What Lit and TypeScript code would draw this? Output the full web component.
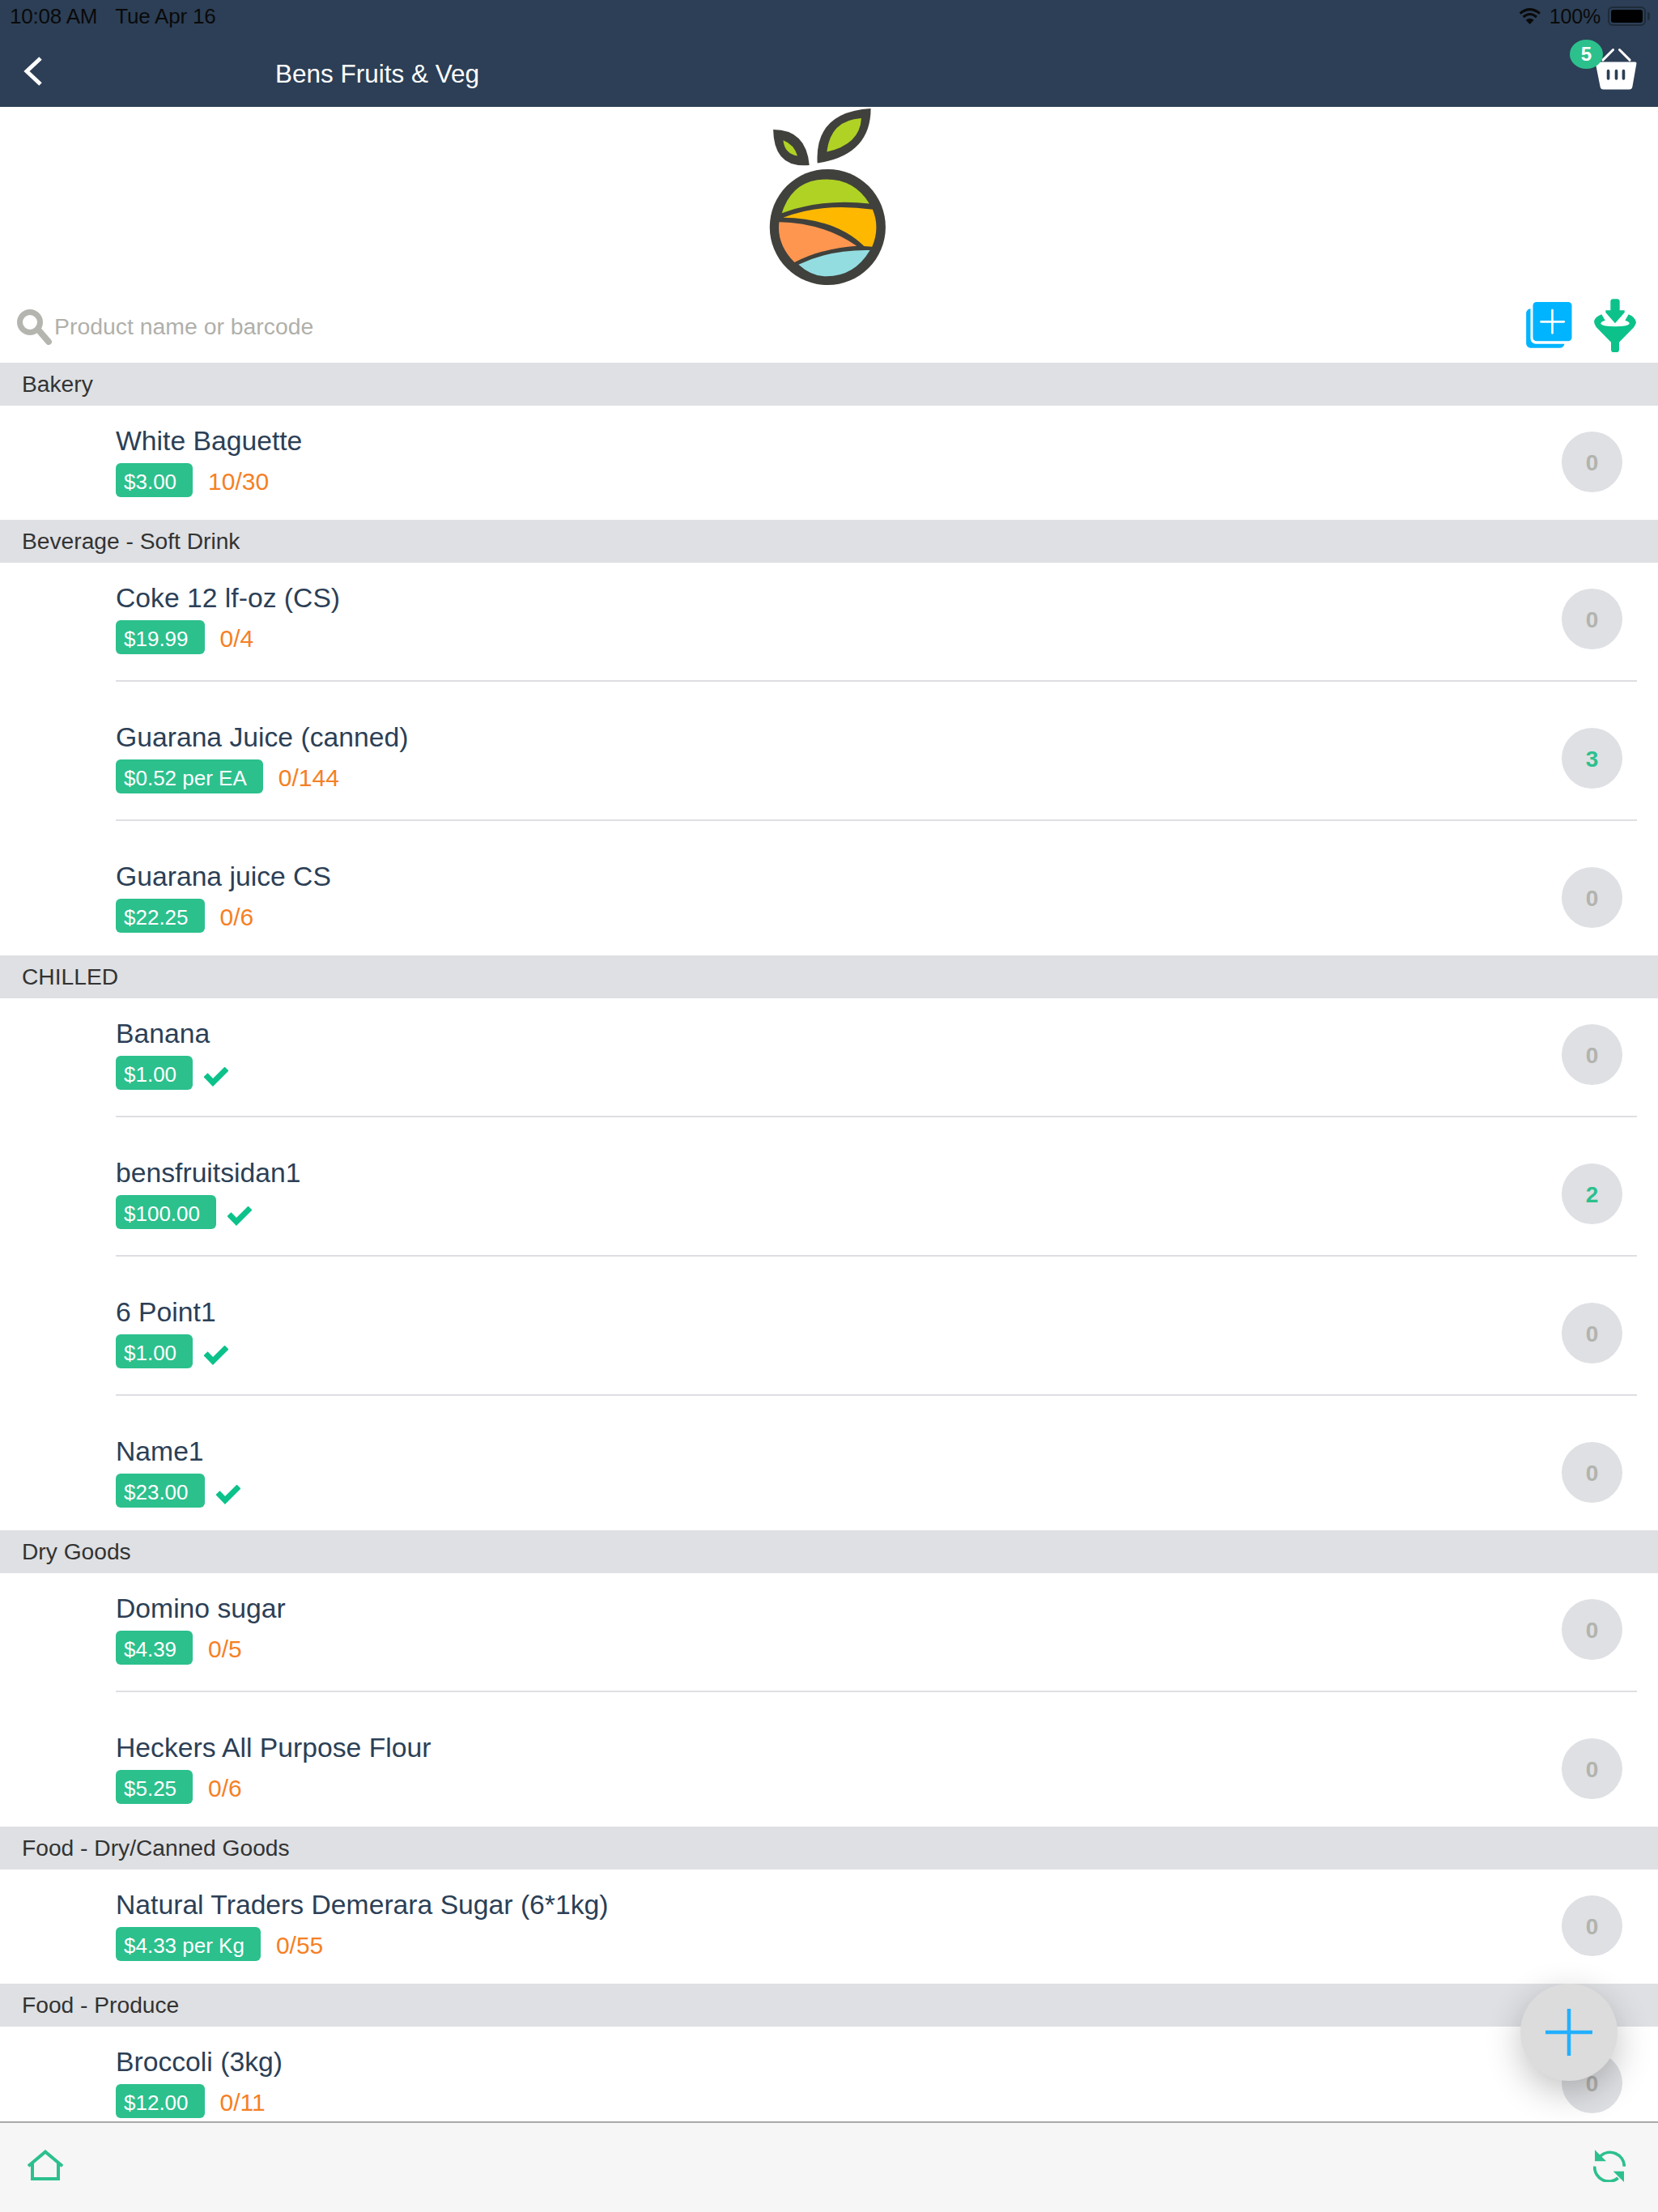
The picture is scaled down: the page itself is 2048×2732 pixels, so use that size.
import { LitElement, html, css, svg } from "lit";
import { customElement } from "lit/decorators.js";

type Item = { name: string; price: string; stock?: string; qty: number };
type Section = { title: string; items: Item[] };

const SECTIONS: Section[] = [
  { title: "Bakery", items: [{ name: "White Baguette", price: "$3.00", stock: "10/30", qty: 0 }] },
  {
    title: "Beverage - Soft Drink",
    items: [
      { name: "Coke 12 lf-oz (CS)", price: "$19.99", stock: "0/4", qty: 0 },
      { name: "Guarana Juice (canned)", price: "$0.52 per EA", stock: "0/144", qty: 3 },
      { name: "Guarana juice CS", price: "$22.25", stock: "0/6", qty: 0 },
    ],
  },
  {
    title: "CHILLED",
    items: [
      { name: "Banana", price: "$1.00", qty: 0 },
      { name: "bensfruitsidan1", price: "$100.00", qty: 2 },
      { name: "6 Point1", price: "$1.00", qty: 0 },
      { name: "Name1", price: "$23.00", qty: 0 },
    ],
  },
  {
    title: "Dry Goods",
    items: [
      { name: "Domino sugar", price: "$4.39", stock: "0/5", qty: 0 },
      { name: "Heckers All Purpose Flour", price: "$5.25", stock: "0/6", qty: 0 },
    ],
  },
  {
    title: "Food - Dry/Canned Goods",
    items: [{ name: "Natural Traders Demerara Sugar (6*1kg)", price: "$4.33 per Kg", stock: "0/55", qty: 0 }],
  },
  { title: "Food - Produce", items: [{ name: "Broccoli (3kg)", price: "$12.00", stock: "0/11", qty: 0 }] },
];

const logo = svg`<svg class="logo" viewBox="0 21 750 700" width="250" height="233">
  <path fill="#40413c" d="M530 27Q530 200 332 230Q320 40 530 27Z"/>
  <path fill="#b0d225" d="M495 63Q380 70 367 188Q490 160 495 63Z"/>
  <path fill="#40413c" d="M168 105Q290 105 302 237Q170 250 168 105Z"/>
  <path fill="#b0d225" d="M205 145Q245 160 258 203Q210 195 205 145Z"/>
  <circle cx="370" cy="467" r="215" fill="#40413c"/>
  <path fill="#b0d225" d="M200 415Q240 290 365 290Q470 290 525 380Q350 360 200 415Z"/>
  <path fill="#ffb800" d="M205 432Q350 375 537 402Q565 470 535 540L505 538Q400 435 205 432Z"/>
  <path fill="#ff9650" d="M190 448Q350 450 478 537Q350 545 247 598Q180 530 190 448Z"/>
  <path fill="#93dde1" d="M262 606Q380 550 527 553Q470 650 365 650Q310 650 262 606Z"/>
</svg>`;

const wifi = svg`<svg class="wifi" viewBox="232 30 82 60" width="28" height="20" fill="none" stroke="#0a0a0a" stroke-width="9">
  <path d="M236 50Q272 20 309 50"/><path d="M248 63Q272 42 297 63"/>
  <path fill="#0a0a0a" stroke="none" d="M272 90L257 74Q272 62 287 74Z"/>
</svg>`;

const basket = svg`<svg class="basket" viewBox="513 183 154 153" width="51" height="51">
  <path fill="#fff" d="M513 240Q513 232 520 232H660Q667 232 665 240L650 325Q648 335 638 335H542Q532 335 530 325Z"/>
  <path stroke="#fff" stroke-width="9" stroke-linecap="round" d="M540 225L578 187M640 225L602 187"/>
  <path stroke="#2c3f56" stroke-width="11" stroke-linecap="round" d="M560 266V294M590 266V294M617 266V294"/>
</svg>`;

const chevron = svg`<svg class="chevron" viewBox="0 0 26 36" width="26" height="36" fill="none" stroke="#fff" stroke-width="5">
  <path d="M23 2L6 18L23 34"/>
</svg>`;

const searchIcon = svg`<svg class="search-icon" viewBox="0 0 44 44" width="44" height="44" fill="none" stroke="#b5b5b0">
  <circle cx="16" cy="16" r="12.5" stroke-width="7"/>
  <path d="M26 25L39 40" stroke-width="8" stroke-linecap="round"/>
</svg>`;

const copyPlus = svg`<svg viewBox="135 75 170 171" width="57" height="57">
  <rect x="135" y="100" width="142" height="145" rx="16" fill="#00b4ff"/>
  <rect x="151" y="66" width="164" height="164" rx="20" fill="#fff"/>
  <rect x="160" y="75" width="144" height="145" rx="13" fill="#00b4ff"/>
  <path d="M190 148H275M232 105V190" stroke="#fff" stroke-width="8" stroke-linecap="round"/>
</svg>`;

const funnel = svg`<svg viewBox="387 57 156 198" width="52" height="66" fill="#0cc28a">
  <path d="M448 68Q448 58 458 58H472Q482 58 482 68V100H500V108L465 148L430 108V100H448Z"/>
  <path d="M387 140Q390 125 415 115L428 137Q410 143 412 150Q420 160 465 160Q510 160 518 150Q520 143 502 137L515 115Q540 125 543 145Q540 155 535 162L480 218V245Q480 255 470 255H460Q450 255 450 245V218L395 162Q387 150 387 140Z"/>
</svg>`;

const check = svg`<svg class="check" viewBox="456 237 90 72" width="30" height="24" fill="none" stroke="#0cc28a" stroke-width="21">
  <path d="M462 266L489 294L540 243"/>
</svg>`;

const home = svg`<svg viewBox="102 465 132 114" width="44" height="38" fill="none" stroke="#2cc08d" stroke-width="12">
  <path d="M105 526L168 473L231 526"/><path d="M120 512V573H216V512"/>
</svg>`;

const refresh = svg`<svg viewBox="504 698 120 120" width="40" height="40" fill="none" stroke="#2cc08d" stroke-width="11">
  <path d="M530 722A53 53 0 0 1 619 760"/>
  <path d="M509 760A53 53 0 0 0 596 803"/>
  <path fill="#2cc08d" stroke="none" d="M510 699V741H552Z"/>
  <path fill="#2cc08d" stroke="none" d="M618 818V778H578Z"/>
</svg>`;

@customElement("app-root")
export class AppRoot extends LitElement {
  static styles = css`
    :host {
      display: flex;
      flex-direction: column;
      position: relative;
      width: 2048px;
      height: 2732px;
      overflow: hidden;
      background: #fff;
      font-family: "Liberation Sans", Arial, sans-serif;
    }
    .nav { flex: none; height: 132px; background: #2c3f56; color: #fff; }
    .status {
      height: 40px;
      display: flex;
      align-items: center;
      padding: 0 15px 0 12px;
      font-size: 26px;
      letter-spacing: -0.2px;
      color: #0a0a0a;
    }
    .status .date { margin-left: 22px; }
    .status .spacer { flex: 1; }
    .status .pct { font-size: 25px; }
    .wifi { margin-right: 10px; }
    .battery {
      width: 47px;
      height: 24px;
      margin-left: 9px;
      box-sizing: border-box;
      border: 2px solid #1e2b3a;
      border-radius: 6px;
      padding: 2px;
      position: relative;
    }
    .battery i { display: block; height: 100%; background: #000; border-radius: 3px; }
    .battery::after {
      content: "";
      position: absolute;
      right: -7px;
      top: 5px;
      width: 3px;
      height: 10px;
      background: #1e2b3a;
      border-radius: 0 3px 3px 0;
    }
    .bar { height: 92px; display: flex; align-items: center; padding-left: 27px; }
    .chevron { margin-top: 4px; }
    .title { margin-left: 287px; margin-top: 10px; font-size: 31.5px; flex: 1; }
    .cart { position: relative; flex: none; width: 83px; height: 62px; margin-right: 26px; margin-top: -12px; margin-left: -10px; }
    .basket { position: absolute; left: 32px; top: 11px; }
    .cart-badge {
      position: absolute;
      left: 0;
      top: 0;
      width: 41px;
      height: 36px;
      border-radius: 50%;
      background: #2cc08d;
      color: #fff;
      font-size: 24px;
      font-weight: 700;
      line-height: 36px;
      text-align: center;
    }
    .logo-wrap { flex: none; height: 233px; display: flex; justify-content: center; }
    .logo { display: block; }
    .search {
      flex: none;
      height: 83px;
      display: flex;
      align-items: center;
      padding: 0 27px 0 21px;
      box-sizing: border-box;
    }
    .search-icon { margin-top: -6px; }
    .placeholder { margin-left: 2px; margin-top: -6px; font-size: 28.4px; color: #b0b0ab; flex: 1; }
    .tools { display: flex; align-items: center; gap: 27px; margin-top: -10px; }
    .tools svg { display: block; }
    .list { flex: 1; min-height: 0; overflow: hidden; }
    .section-head {
      height: 53px;
      line-height: 52px;
      padding-left: 27px;
      background: #dee0e3;
      color: #333;
      font-size: 28.2px;
    }
    .row {
      height: 141px;
      box-sizing: border-box;
      padding: 23px 26px 0 143px;
      position: relative;
    }
    .name { font-size: 33.7px; line-height: 40px; color: #2c3f56; }
    .meta { display: flex; align-items: center; margin-top: 8px; height: 42px; }
    .price {
      height: 42px;
      line-height: 47px;
      box-sizing: border-box;
      padding: 0 20px 0 10px;
      background: #2cc08d;
      border-radius: 6px;
      color: #fff;
      font-size: 26px;
    }
    .stock { margin-left: 19px; font-size: 30px; color: #f58025; margin-top: 4px; }
    .check { margin-left: 14px; margin-top: 9px; }
    .qty {
      position: absolute;
      right: 44px;
      top: 32px;
      width: 75px;
      height: 75px;
      border-radius: 50%;
      background: #dee0e3;
      color: #b3b3ae;
      font-size: 28px;
      font-weight: 700;
      line-height: 78px;
      text-align: center;
    }
    .qty.on { color: #2cc08d; }
    .divider { height: 2px; margin: 4px 26px 25px 143px; background: #dfdfe3; }
    .footer {
      flex: none;
      height: 112px;
      box-sizing: border-box;
      border-top: 2px solid #a9a9ab;
      background: #f6f6f6;
      display: flex;
      justify-content: space-between;
      align-items: flex-start;
      padding: 33px 40px 0 34px;
      position: relative;
      z-index: 1;
    }
    .footer svg { display: block; }
    .fab {
      position: absolute;
      left: 1878px;
      top: 2450px;
      width: 120px;
      height: 120px;
      border-radius: 50%;
      background: #dcdcdc;
      box-shadow: 0 14px 44px rgba(0, 0, 0, 0.24);
      display: flex;
      align-items: center;
      justify-content: center;
    }
  `;

  private renderItem(item: Item, last: boolean) {
    return html`
      <div class="row">
        <div class="name">${item.name}</div>
        <div class="meta">
          <span class="price">${item.price}</span>
          ${item.stock ? html`<span class="stock">${item.stock}</span>` : check}
        </div>
        <div class="qty ${item.qty > 0 ? "on" : ""}">${item.qty}</div>
      </div>
      ${last ? "" : html`<div class="divider"></div>`}
    `;
  }

  render() {
    return html`
      <div class="nav">
        <div class="status">
          <span>10:08 AM</span><span class="date">Tue Apr 16</span>
          <span class="spacer"></span>
          ${wifi}<span class="pct">100%</span>
          <span class="battery"><i></i></span>
        </div>
        <div class="bar">
          ${chevron}
          <span class="title">Bens Fruits &amp; Veg</span>
          <div class="cart">
            ${basket}
            <span class="cart-badge">5</span>
          </div>
        </div>
      </div>
      <div class="logo-wrap">${logo}</div>
      <div class="search">
        ${searchIcon}
        <span class="placeholder">Product name or barcode</span>
        <div class="tools">${copyPlus}${funnel}</div>
      </div>
      <div class="list">
        ${SECTIONS.map(
          (s) => html`
            <div class="section-head">${s.title}</div>
            ${s.items.map((it, i) => this.renderItem(it, i === s.items.length - 1))}
          `
        )}
      </div>
      <div class="footer">${home}${refresh}</div>
      <div class="fab">
        <svg viewBox="0 0 58 58" width="58" height="58"><path d="M0 29H58M29 0V58" stroke="#22b0ff" stroke-width="4.5"/></svg>
      </div>
    `;
  }
}
